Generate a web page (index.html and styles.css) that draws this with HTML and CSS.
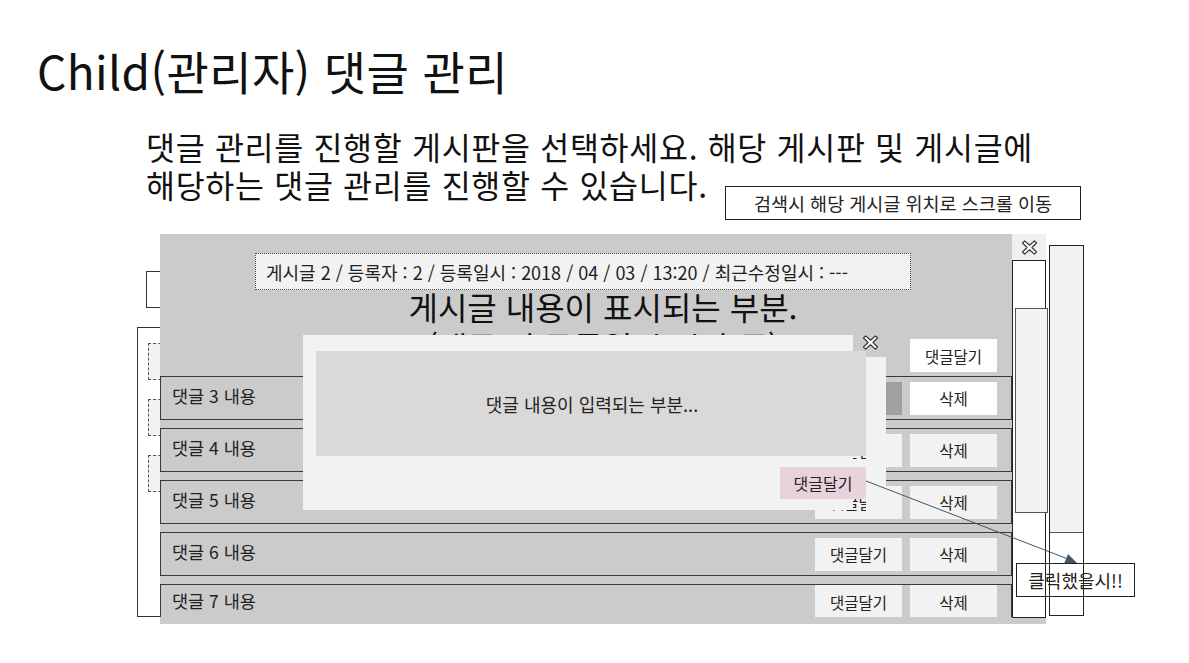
FILE: index.html
```html
<!DOCTYPE html>
<html lang="ko">
<head>
<meta charset="utf-8">
<title>Child(관리자) 댓글 관리</title>
<link rel="stylesheet" href="styles.css">
</head>
<body>
<div class="page">
  <h1 class="title">Child(관리자) 댓글 관리</h1>
  <p class="desc">댓글 관리를 진행할 게시판을 선택하세요. 해당 게시판 및 게시글에<br>해당하는 댓글 관리를 진행할 수 있습니다.</p>

  <div class="note note-search">검색시 해당 게시글 위치로 스크롤 이동</div>

  <!-- windows behind -->
  <div class="back-box back-box-top"></div>
  <div class="back-box back-box-list">
    <div class="dash"></div>
    <div class="dash"></div>
    <div class="dash"></div>
  </div>

  <!-- outer scrollbar -->
  <div class="outer-scroll"><div class="outer-thumb"></div></div>

  <!-- main window -->
  <div class="win-main">
    <div class="win-content">
      <div class="post-head">
        <div class="post-meta">게시글 2 / 등록자 : 2 / 등록일시 : 2018 / 04 / 03 / 13:20 / 최근수정일시 : ---</div>
        <div class="post-body">게시글 내용이 표시되는 부분.<br>(댓글 및 등록일시 시간 등)</div>
        <div class="post-actions"><span class="btn btn-white">댓글달기</span></div>
      </div>
      <div class="rows">
        <div class="row"><span class="row-text">댓글 3 내용</span><span class="btn btn-dark"></span><span class="btn btn-white">삭제</span></div>
        <div class="row"><span class="row-text">댓글 4 내용</span><span class="btn">댓글달기</span><span class="btn">삭제</span></div>
        <div class="row"><span class="row-text">댓글 5 내용</span><span class="btn">댓글달기</span><span class="btn">삭제</span></div>
        <div class="row"><span class="row-text">댓글 6 내용</span><span class="btn">댓글달기</span><span class="btn">삭제</span></div>
        <div class="row row-last"><span class="row-text">댓글 7 내용</span><span class="btn">댓글달기</span><span class="btn">삭제</span></div>
      </div>
    </div>
    <div class="win-side">
      <div class="win-close">
        <svg class="x-icon" viewBox="0 0 20 16" width="19" height="15"><path d="M2.5 3.2 L4.8 1 L10 5.6 L15.2 1 L17.5 3.2 L12.6 8 L17.5 12.8 L15.2 15 L10 10.4 L4.8 15 L2.5 12.8 L7.4 8 Z" fill="#fff" stroke="#333" stroke-width="1.2" stroke-linejoin="round"/></svg>
      </div>
      <div class="inner-scroll"><div class="inner-thumb"></div></div>
    </div>
  </div>

  <!-- reply dialog -->
  <div class="dialog">
    <div class="dialog-strip"></div>
    <svg class="x-icon dialog-x" viewBox="0 0 20 16" width="19" height="15"><path d="M2.5 3.2 L4.8 1 L10 5.6 L15.2 1 L17.5 3.2 L12.6 8 L17.5 12.8 L15.2 15 L10 10.4 L4.8 15 L2.5 12.8 L7.4 8 Z" fill="#fff" stroke="#333" stroke-width="1.2" stroke-linejoin="round"/></svg>
    <div class="dialog-inner">
      <div class="dialog-input">댓글 내용이 입력되는 부분...</div>
      <span class="btn btn-pink">댓글달기</span>
    </div>
  </div>

  <svg class="arrow" width="1189" height="663" viewBox="0 0 1189 663">
    <line x1="866" y1="481" x2="1068" y2="559" stroke="#44546a" stroke-width="1"/>
    <polygon points="1077,563 1064,564 1068,554" fill="#44546a"/>
  </svg>

  <div class="note note-click">클릭했을시!!</div>
</div>
</body>
</html>
```

FILE: styles.css
```css
* { box-sizing: border-box; }
html, body { margin: 0; padding: 0; background: #fff; }
body {
  font-family: "Noto Sans CJK KR", "Noto Sans", sans-serif;
  color: #111;
}
.page {
  position: relative;
  width: 1189px;
  height: 663px;
  overflow: hidden;
}
.title {
  margin: 0;
  padding: 42px 0 0 37px;
  font-size: 46px;
  font-weight: 400;
  line-height: 56px;
  letter-spacing: 0.4px;
}
.desc {
  margin: 29px 0 0 146px;
  font-size: 31.5px;
  line-height: 38px;
  letter-spacing: 0.7px;
}
.note {
  position: absolute;
  background: #fff;
  border: 1px solid #222;
  display: flex;
  align-items: center;
  justify-content: center;
  font-size: 18.5px;
  color: #222;
}
.note-search { left: 725px; top: 186px; width: 356px; height: 34px; }
.note-click { left: 1016px; top: 563px; width: 119px; height: 34px; z-index: 6; background: transparent; font-size: 18px; }

.back-box {
  position: absolute;
  background: #fff;
  border: 1px solid #333;
}
.back-box-top { left: 146px; top: 271px; width: 80px; height: 37px; }
.back-box-list {
  left: 137px; top: 327px; width: 200px; height: 290px;
  display: flex; flex-direction: column; gap: 19px;
  padding: 15px 0 0 10px;
}
.dash {
  width: 120px; height: 37px;
  border: 1px dashed #555;
  background: #f2f2f2;
}

.outer-scroll {
  position: absolute;
  left: 1049px; top: 245px; width: 35px; height: 371px;
  border: 1px solid #222;
  background: #fff;
}
.outer-thumb {
  height: 287px;
  border-bottom: 1px solid #555;
  background: #f2f2f2;
}

.win-main {
  position: absolute;
  left: 160px; top: 234px;
  width: 886px; height: 390px;
  background: #cbcbcb;
  display: flex;
  align-items: flex-start;
  z-index: 2;
}
.win-content {
  width: 852px;
  height: 383px;
  overflow: hidden;
  display: flex;
  flex-direction: column;
}
.post-head {
  height: 142px;
  flex-shrink: 0;
  display: flex;
  flex-direction: column;
}
.post-meta {
  margin: 19px 0 0 95px;
  width: 656px;
  height: 37px;
  flex-shrink: 0;
  border: 1px dotted #444;
  background: #f2f2f2;
  font-size: 18px;
  display: flex;
  align-items: center;
  padding-left: 10px;
  color: #222;
  white-space: nowrap;
}
.post-body {
  height: 50px;
  flex-shrink: 0;
  padding-left: 34px;
  text-align: center;
  font-size: 32px;
  line-height: 40px;
  margin-top: -4px;
  color: #111;
  white-space: nowrap;
}
.post-actions {
  display: flex;
  justify-content: flex-end;
  padding-right: 15px;
  margin-top: 3px;
}
.rows {
  display: flex;
  flex-direction: column;
  gap: 8px;
}
.row {
  height: 44px;
  border: 1px solid #3a3a3a;
  display: flex;
  align-items: center;
  gap: 8px;
  padding: 0 14px 0 11px;
  flex-shrink: 0;
}
.row-last { height: 36px; align-items: flex-start; }
.row-last .row-text { margin-top: 3px; }
.row-text {
  margin-right: auto;
  font-size: 17.5px;
  color: #222;
  padding-bottom: 5px;
}
.btn {
  width: 87px;
  height: 33px;
  background: #f2f2f2;
  display: inline-flex;
  align-items: center;
  justify-content: center;
  font-size: 15.5px;
  color: #222;
  flex-shrink: 0;
}
.btn-white { background: #fff; }
.btn-dark { background: #a0a0a0; }

.win-side {
  width: 34px;
  display: flex;
  flex-direction: column;
}
.win-close {
  height: 26px;
  background: #f0f0f0;
  display: flex;
  align-items: center;
  justify-content: center;
}
.inner-scroll {
  height: 358px;
  border: 1px solid #222;
  background: #fff;
  position: relative;
  padding-top: 47px;
}
.inner-thumb {
  margin-left: 2px;
  width: 33px;
  height: 205px;
  border: 1px solid #555;
  background: #f2f2f2;
}

.dialog {
  position: absolute;
  left: 303px; top: 335px;
  width: 550px; height: 175px;
  background: #f2f2f2;
  z-index: 4;
}
.dialog-strip {
  position: absolute;
  left: 563px; top: 22px;
  width: 20px; height: 161px;
  background: #f2f2f2;
}
.dialog-x {
  position: absolute;
  left: 558px; top: 0px;
}
.dialog-inner {
  position: relative;
  margin: 16px 0 0 13px;
  width: 550px;
  display: flex;
  flex-direction: column;
  align-items: flex-end;
}
.dialog-input {
  width: 100%;
  height: 105px;
  background: #d9d9d9;
  display: flex;
  align-items: center;
  justify-content: center;
  font-size: 18px;
  color: #222;
  padding-left: 2px;
}
.btn-pink {
  margin-top: 11px;
  width: 86px;
  height: 32px;
  background: #e8d3dc;
  font-size: 16px;
}
.arrow {
  position: absolute;
  left: 0; top: 0;
  z-index: 5;
  pointer-events: none;
}
```
